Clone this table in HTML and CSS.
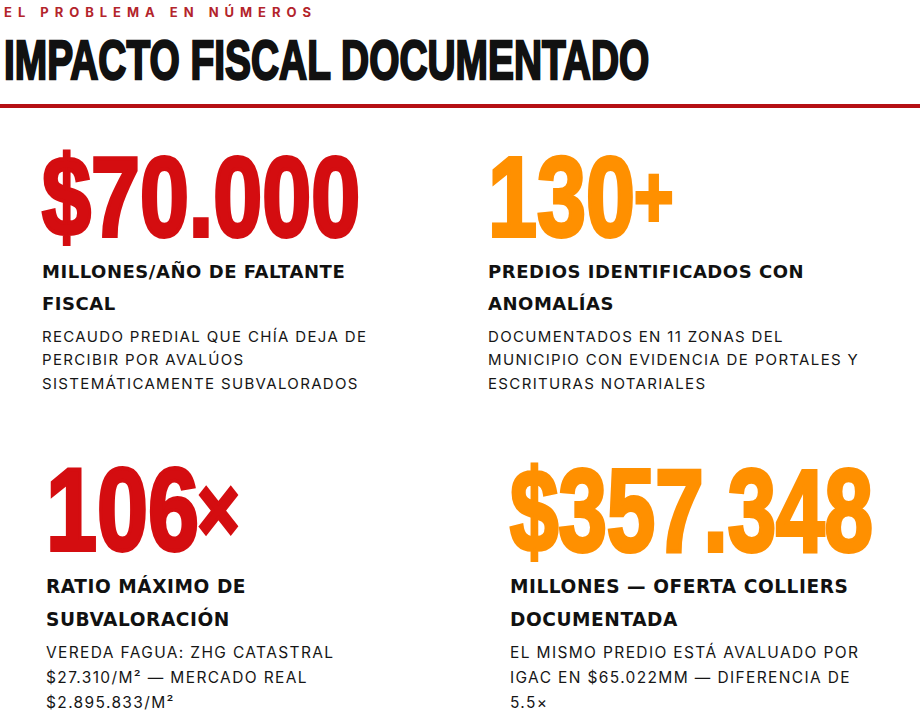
FILE: index.html
```html
<!DOCTYPE html>
<html lang="es">
<head>
<meta charset="utf-8">
<title>Impacto fiscal documentado</title>
<link rel="stylesheet" href="styles.css">
</head>
<body>
<section class="impact">
  <header class="impact-head">
    <p class="eyebrow">EL PROBLEMA EN NÚMEROS</p>
    <h2 class="title"><span class="title-text">IMPACTO FISCAL DOCUMENTADO</span></h2>
  </header>
  <div class="stats">
    <article class="stat stat-a">
      <div class="num num-red"><span class="num-text">$70.000</span></div>
      <h3 class="label">MILLONES/AÑO DE FALTANTE FISCAL</h3>
      <p class="desc">RECAUDO PREDIAL QUE CHÍA DEJA DE PERCIBIR POR AVALÚOS SISTEMÁTICAMENTE SUBVALORADOS</p>
    </article>
    <article class="stat stat-b">
      <div class="num num-orange"><span class="num-text">130<span class="sym sym-plus">+</span></span></div>
      <h3 class="label">PREDIOS IDENTIFICADOS CON ANOMALÍAS</h3>
      <p class="desc">DOCUMENTADOS EN 11 ZONAS DEL MUNICIPIO CON EVIDENCIA DE PORTALES Y ESCRITURAS NOTARIALES</p>
    </article>
    <article class="stat stat-c">
      <div class="num num-red"><span class="num-text">106<span class="sym sym-times">×</span></span></div>
      <h3 class="label">RATIO MÁXIMO DE SUBVALORACIÓN</h3>
      <p class="desc">VEREDA FAGUA: ZHG CATASTRAL $27.310/M² — MERCADO REAL $2.895.833/M²</p>
    </article>
    <article class="stat stat-d">
      <div class="num num-orange"><span class="num-text">$357.348</span></div>
      <h3 class="label">MILLONES — OFERTA COLLIERS DOCUMENTADA</h3>
      <p class="desc">EL MISMO PREDIO ESTÁ AVALUADO POR IGAC EN $65.022MM — DIFERENCIA DE 5.5×</p>
    </article>
  </div>
</section>
</body>
</html>
```
FILE: styles.css
```css
* { box-sizing: border-box; }
html, body { margin: 0; padding: 0; background: #ffffff; }
body {
  width: 920px;
  height: 727px;
  overflow: hidden;
  font-family: Inter, "Liberation Sans", sans-serif;
  color: #141414;
}

.impact { padding: 4px 0 0 0; }

.impact-head {
  padding: 0 0 16px 4px;
  border-bottom: 4px solid #b50f14;
}

.eyebrow {
  margin: 0;
  font-family: Inter, "Liberation Sans", sans-serif;
  font-weight: 700;
  font-size: 13px;
  line-height: 16px;
  letter-spacing: 0.46em;
  color: #b3242b;
}

/* Condensed display face: a narrower size stretched vertically */
.title {
  margin: 12px 0 0 0;
  height: 56px;
  padding-bottom: 2.6px;
  display: flex;
  align-items: flex-end;
  font-family: "Liberation Sans", Arial, sans-serif;
  font-weight: 700;
  font-size: 38.9px;
  color: #111111;
  white-space: nowrap;
}
.title-text {
  display: inline-block;
  line-height: 1;
  transform: scaleY(1.44);
  transform-origin: 50% 84.65%;
  -webkit-text-stroke: 1.6px #111111;
}

.stats {
  display: grid;
  grid-template-columns: 460px 460px;
  row-gap: 56px;
  padding-top: 32px;
}

.stat { font-size: 16px; min-width: 0; }
.stat-a { padding-left: 42px; }
.stat-b { padding-left: 28px; }
.stat-c { padding-left: 46px; font-size: 16.5px; }
.stat-d { padding-left: 50px; font-size: 16.5px; }

.num {
  display: flex;
  align-items: flex-end;
  height: 114px;
  padding-bottom: 4px;
  font-family: "Liberation Sans", Arial, sans-serif;
  font-weight: 700;
  font-size: 88px;
  white-space: nowrap;
}
.num-text {
  display: inline-block;
  line-height: 1;
  transform: scaleY(1.295);
  transform-origin: 50% 84.65%;
}
.stat-c .num { height: 117.6px; font-size: 91.7px; padding-bottom: 4px; }
.stat-c .num-text { transform: scaleY(1.282); }
.stat-d .num { height: 117.6px; font-size: 87px; padding-bottom: 4.7px; }
.stat-d .num-text { transform: scaleY(1.352); }

.sym { display: inline-block; }
.sym-plus { font-size: 0.76em; vertical-align: 0.1em; margin-left: -0.01em; }
.sym-times { font-size: 0.78em; vertical-align: 0.1em; margin-left: -0.02em; }

.num-red { color: #d40d10; }
.num-red .num-text {
  -webkit-text-stroke: 3px #d40d10;
  text-shadow: 0 0 1.5px #b80000;
}
.num-orange { color: #ff9000; }
.num-orange .num-text {
  -webkit-text-stroke: 3px #ff9000;
  text-shadow: 0 0 1.5px #ff3c00;
}

.label {
  margin: 1.5px 0 0 0;
  font-family: "DejaVu Sans", "Liberation Sans", sans-serif;
  font-weight: 700;
  font-size: 1.125em;
  line-height: 1.78;
  letter-spacing: 0.03em;
  color: #111111;
}

.desc {
  margin: 5px 0 0 0;
  font-family: Inter, "Liberation Sans", sans-serif;
  font-weight: 400;
  font-size: 0.94em;
  line-height: 1.56;
  letter-spacing: 0.088em;
  color: #161616;
}
.stat-c .desc, .stat-d .desc { line-height: 1.6; }

.stat-a .label, .stat-a .desc { max-width: 352px; }
.stat-b .label, .stat-b .desc { max-width: 375px; }
.stat-c .label, .stat-c .desc { max-width: 335px; }
.stat-d .label, .stat-d .desc { max-width: 372px; }
```
